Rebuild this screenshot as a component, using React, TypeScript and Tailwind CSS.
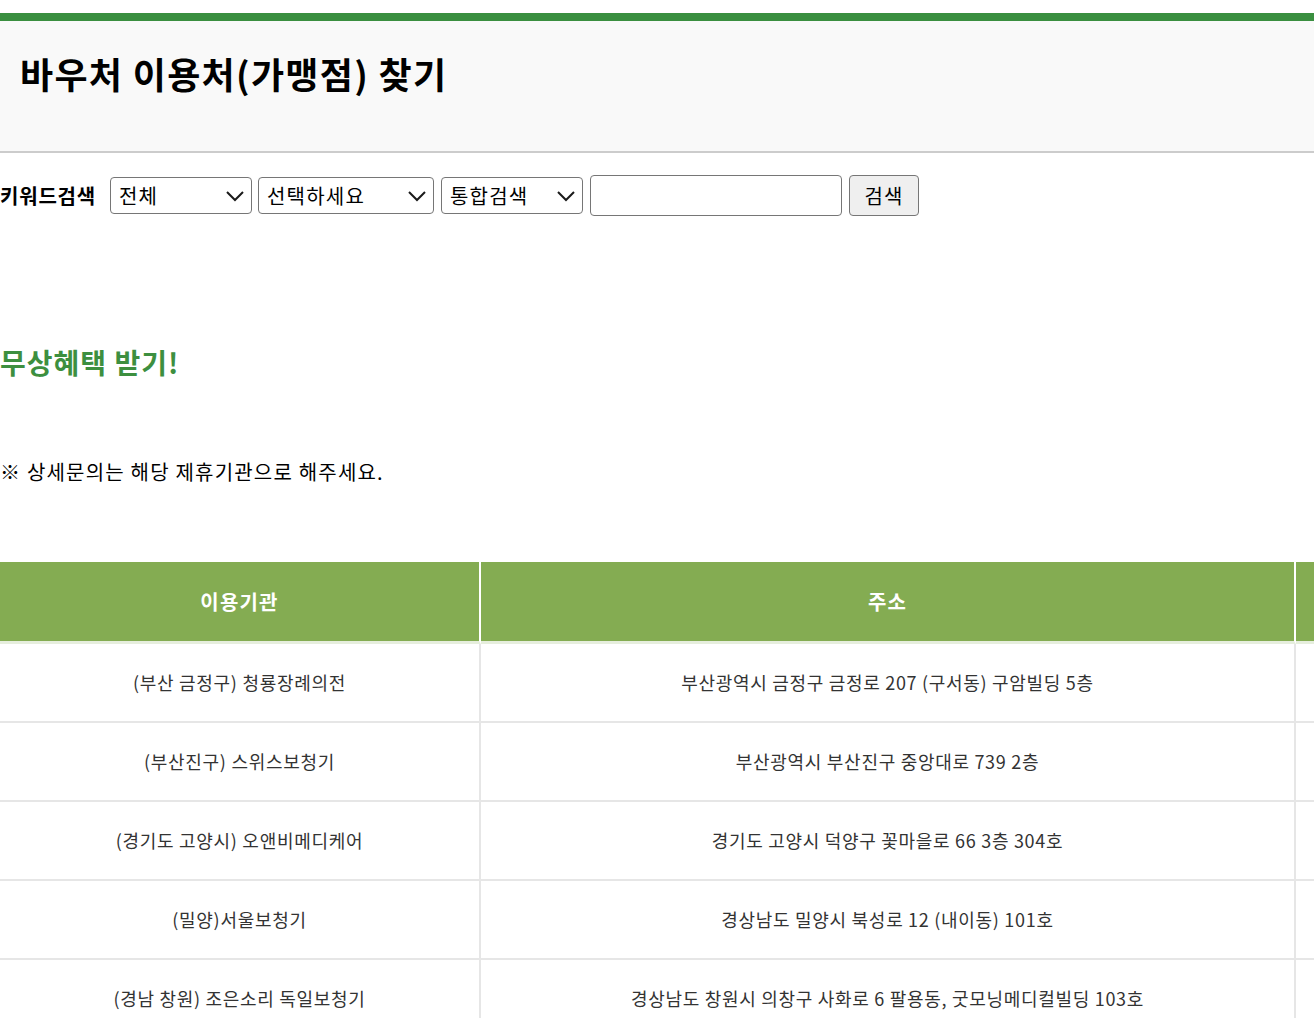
import { useState } from "react";

const ROWS = [
  {
    name: "(부산 금정구) 청룡장례의전",
    address: "부산광역시 금정구 금정로 207 (구서동) 구암빌딩 5층",
  },
  {
    name: "(부산진구) 스위스보청기",
    address: "부산광역시 부산진구 중앙대로 739 2층",
  },
  {
    name: "(경기도 고양시) 오앤비메디케어",
    address: "경기도 고양시 덕양구 꽃마을로 66 3층 304호",
  },
  {
    name: "(밀양)서울보청기",
    address: "경상남도 밀양시 북성로 12 (내이동) 101호",
  },
  {
    name: "(경남 창원) 조은소리 독일보청기",
    address: "경상남도 창원시 의창구 사화로 6 팔용동, 굿모닝메디컬빌딩 103호",
  },
];

function Chevron() {
  return (
    <svg
      width="20"
      height="12"
      viewBox="0 0 20 12"
      className="pointer-events-none absolute right-[7px] top-1/2 -translate-y-1/2"
    >
      <path d="M2 2 L10 10 L18 2" fill="none" stroke="#1a1a1a" strokeWidth="2" />
    </svg>
  );
}

function SelectBox({
  width,
  value,
  options,
  onChange,
}: {
  width: string;
  value: string;
  options: string[];
  onChange: (v: string) => void;
}) {
  return (
    <div className={`relative ${width}`}>
      <select
        value={value}
        onChange={(e) => onChange(e.target.value)}
        className="h-[37px] w-full appearance-none rounded-[4px] border-[1.5px] border-[#767676] bg-white pl-2 pr-8 text-[20px] tracking-[1.2px] text-black"
      >
        {options.map((o) => (
          <option key={o}>{o}</option>
        ))}
      </select>
      <Chevron />
    </div>
  );
}

export default function App() {
  const [area, setArea] = useState("전체");
  const [category, setCategory] = useState("선택하세요");
  const [mode, setMode] = useState("통합검색");
  const [keyword, setKeyword] = useState("");

  return (
    <div className="w-full overflow-hidden bg-white pt-[13px] font-['Noto_Sans_CJK_KR','Noto_Sans',sans-serif] text-black">
      {/* Title bar */}
      <div className="h-[8px] bg-[#3a8f40]" />
      <div className="h-[132px] border-b-2 border-[#cccccc] bg-[#f9f9f9] pl-5 pt-[30px]">
        <h1 className="text-[36px] font-bold leading-[44px] tracking-[1.3px]">
          바우처 이용처(가맹점) 찾기
        </h1>
      </div>

      {/* Keyword search */}
      <div className="mt-[22px] flex items-center">
        <span className="mr-[14px] text-[20px] font-bold tracking-[0.8px]">키워드검색</span>
        <SelectBox
          width="w-[142px]"
          value={area}
          onChange={setArea}
          options={["전체", "서울", "부산", "경기", "경남"]}
        />
        <div className="ml-[6px]">
          <SelectBox
            width="w-[176px]"
            value={category}
            onChange={setCategory}
            options={["선택하세요", "보청기", "의료기기", "장례"]}
          />
        </div>
        <div className="ml-[7px]">
          <SelectBox
            width="w-[142px]"
            value={mode}
            onChange={setMode}
            options={["통합검색", "기관명", "주소"]}
          />
        </div>
        <input
          value={keyword}
          onChange={(e) => setKeyword(e.target.value)}
          className="ml-[7px] h-[41px] w-[252px] rounded-[4px] border-[1.5px] border-[#767676] bg-white px-2 text-[20px]"
        />
        <button className="ml-[7px] h-[41px] w-[70px] rounded-[4px] border-[1.5px] border-[#767676] bg-[#efefef] text-[20px] tracking-[1.2px]">
          검색
        </button>
      </div>

      {/* Benefit */}
      <h2 className="mt-[128px] text-[28px] font-bold leading-[36px] tracking-[1px] text-[#3d8f3f]">
        무상혜택 받기!
      </h2>
      <p className="mt-[77px] text-[20px] leading-[30px] tracking-[1.2px]">
        ※ 상세문의는 해당 제휴기관으로 해주세요.
      </p>

      {/* Result table */}
      <div className="mt-[75px] grid w-[1600px] grid-cols-[481px_815px_304px] text-center">
        <div className="flex h-[82px] items-center justify-center border-r-2 border-b-[3px] border-r-white border-b-[#e6eedd] bg-[#84ac52] text-[20px] font-bold tracking-[1.2px] text-white">
          이용기관
        </div>
        <div className="flex h-[82px] items-center justify-center border-r-2 border-b-[3px] border-r-white border-b-[#e6eedd] bg-[#84ac52] text-[20px] font-bold tracking-[1.2px] text-white">
          주소
        </div>
        <div className="h-[82px] border-b-[3px] border-b-[#e6eedd] bg-[#84ac52]" />
        {ROWS.map((row, i) => (
          <div key={i} className="contents">
            <div className="flex h-[79px] items-center justify-center border-r-2 border-b-2 border-[#e6e6e6] text-[18px] tracking-[0.7px] text-[#333333]">
              {row.name}
            </div>
            <div className="flex h-[79px] items-center justify-center border-r-2 border-b-2 border-[#e6e6e6] text-[18px] tracking-[0.7px] text-[#333333]">
              {row.address}
            </div>
            <div className="h-[79px] border-b-2 border-[#e6e6e6]" />
          </div>
        ))}
      </div>
    </div>
  );
}
